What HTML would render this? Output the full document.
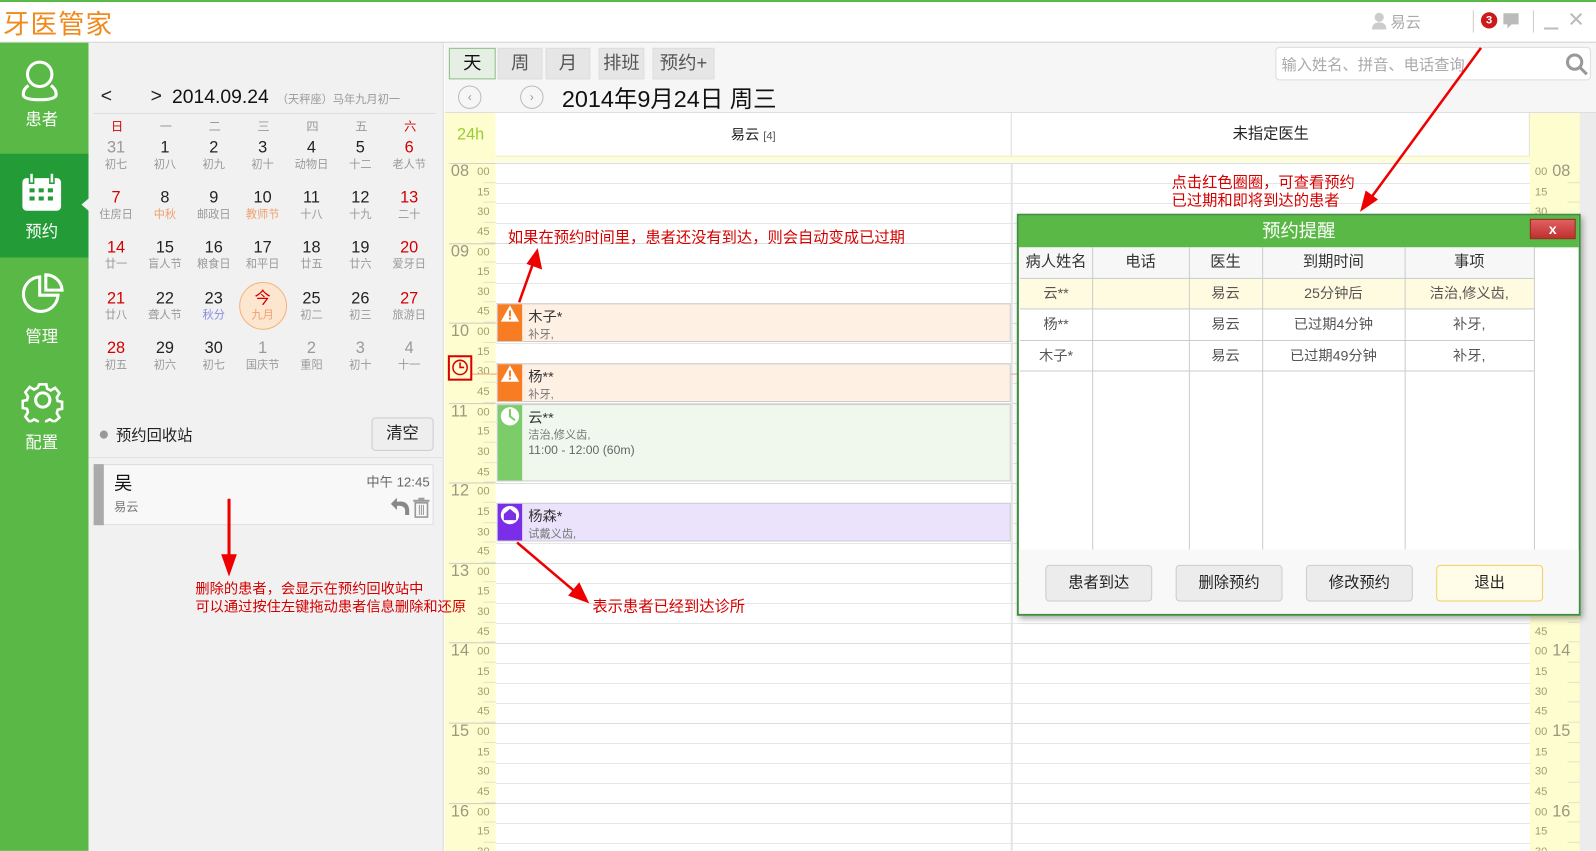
<!DOCTYPE html>
<html><head><meta charset="utf-8"><style>
*{margin:0;padding:0;box-sizing:border-box}
body{width:1596px;height:851px;overflow:hidden;background:#fff;font-family:"Liberation Sans","Noto Sans CJK SC",sans-serif}
#w{position:absolute;left:0;top:0;width:1568px;height:836px;transform:scale(1.01786);transform-origin:0 0;overflow:hidden}
.a{position:absolute}
.red{color:#d40000}
.cal{position:absolute;width:48px;text-align:center}
.cal .n{font-size:16px;color:#222;height:18px;line-height:18px}
.cal .n.r{color:#d40000}
.cal .l{font-size:11px;color:#999;line-height:14px}
.tab{position:absolute;top:47px;height:31px;background:#e6e6e6;border:1px solid #ddd;font-size:18px;color:#555;text-align:center;line-height:29px}
.slot{height:19.65px;position:relative;font-size:11px;color:#a0a070}
.tc .slot .m{position:absolute;right:6px;top:3px}
.tc .slot .h{position:absolute;left:6px;top:0px;font-size:16px;color:#999980}
.tc .slot::after{content:"";position:absolute;right:0;width:12px;bottom:0;border-bottom:1px solid #e4e4c8}
.tc .slot.hr::before{content:"";position:absolute;left:4px;right:0;top:0;border-top:1px solid #ccc}
.tr .slot .m{position:absolute;left:5px;top:3px}
.tr .slot .h{position:absolute;left:22px;top:0;font-size:16px;color:#999980}
.ev{position:absolute;left:488px;width:505px;border:1px solid #ccc}
.ev .s{position:absolute;left:0;top:0;bottom:0;width:24px}
.ev .t{position:absolute;left:30px;top:2px;font-size:14px;color:#333}
.ev .d{position:absolute;left:30px;top:21px;font-size:11px;color:#777}
.th{position:absolute;top:243px;height:30px;line-height:30px;text-align:center;font-size:15px;color:#333}
.td{position:absolute;height:30px;line-height:30px;text-align:center;font-size:14px;color:#555}
.btn{position:absolute;top:555px;width:105px;height:36px;border:1px solid #ccc;border-radius:4px;background:#ececec;font-size:15px;text-align:center;line-height:34px;color:#222}
</style></head><body><div id="w">
<div class="a" style="left:0;top:0;width:1568px;height:2px;background:#5ab946"></div>
<div class="a" style="left:3px;top:4px;font-size:26px;color:#f08a1c;letter-spacing:1px">牙医管家</div>
<div class="a" style="left:0;top:41px;width:1568px;height:1px;background:#ccc"></div>
<svg class="a" style="left:1347px;top:12px" width="16" height="18"><circle cx="8" cy="5" r="4.5" fill="#ccc"/><path d="M1 17 Q1 10 8 10 Q15 10 15 17Z" fill="#ccc"/></svg>
<div class="a" style="left:1366px;top:11px;font-size:15px;color:#aaa">易云</div>
<div class="a" style="left:1447px;top:10px;width:1px;height:22px;background:#ccc"></div>
<div class="a" style="left:1455px;top:12px;width:16px;height:16px;border-radius:50%;background:#cc1a1a;color:#fff;font-size:11px;font-weight:bold;text-align:center;line-height:16px">3</div>
<svg class="a" style="left:1476px;top:12px" width="17" height="17"><path d="M1 1H16V12H9L5 16V12H1Z" fill="#bbb"/></svg>
<div class="a" style="left:1506px;top:10px;width:1px;height:22px;background:#ccc"></div>
<div class="a" style="left:1517px;top:27px;width:14px;height:2px;background:#bbb"></div>
<div class="a" style="left:1540px;top:7px;font-size:20px;color:#bbb">✕</div>
<div class="a" style="left:0;top:42px;width:87px;height:800px;background:#5ab946"></div>
<div class="a" style="left:0;top:151px;width:87px;height:102px;background:#239b36"></div>
<div class="a" style="left:80px;top:195px;width:0;height:0;border-top:6px solid transparent;border-bottom:6px solid transparent;border-right:7px solid #f0f0f0"></div>
<svg class="a" style="left:20px;top:58px" width="40" height="44" fill="none" stroke="#fff" stroke-width="3"><circle cx="19" cy="15" r="12"/><path d="M8 26 Q2 30 3 36 Q5 40 19 40 Q33 40 35 36 Q36 30 30 26"/></svg>
<div class="a" style="left:0;top:104px;width:82px;text-align:center;color:#fff;font-size:16px">患者</div>
<svg class="a" style="left:21px;top:170px" width="40" height="38"><rect x="1" y="5" width="38" height="32" rx="4" fill="#fff"/><rect x="8" y="0" width="4" height="10" fill="#fff" stroke="#239b36" stroke-width="1.5"/><rect x="28" y="0" width="4" height="10" fill="#fff" stroke="#239b36" stroke-width="1.5"/><g fill="#239b36"><rect x="8" y="15" width="5" height="4"/><rect x="17" y="15" width="5" height="4"/><rect x="26" y="15" width="5" height="4"/><rect x="8" y="23" width="5" height="4"/><rect x="17" y="23" width="5" height="4"/><rect x="26" y="23" width="5" height="4"/></g></svg>
<div class="a" style="left:0;top:214px;width:82px;text-align:center;color:#fff;font-size:16px">预约</div>
<svg class="a" style="left:21px;top:268px" width="42" height="42" fill="none" stroke="#fff" stroke-width="3"><path d="M18 4 A17 17 0 1 0 36 22 L18 22Z"/><path d="M24 2 A16 16 0 0 1 40 17 L24 17Z"/></svg>
<div class="a" style="left:0;top:317px;width:82px;text-align:center;color:#fff;font-size:16px">管理</div>
<svg class="a" style="left:21px;top:373px" width="42" height="42" fill="none" stroke="#fff" stroke-width="3"><circle cx="21" cy="20" r="7"/><path d="M17 3h8l1 5 4 2 5-3 5 6-3 5 1 4 5 1v8l-5 1-1 4 3 5-6 5-5-3-4 2-1 5h-8l-1-5-4-2-5 3-5-6 3-5-1-4-5-1v-8l5-1 1-4-3-5 5-6 5 3 4-2z" transform="translate(3 2) scale(.86)"/></svg>
<div class="a" style="left:0;top:421px;width:82px;text-align:center;color:#fff;font-size:16px">配置</div>
<div class="a" style="left:87px;top:42px;width:349px;height:800px;background:#f1f1f1;border-right:1px solid #ddd"></div>
<div class="a" style="left:99px;top:84px;font-size:19px;color:#222">&lt;</div>
<div class="a" style="left:148px;top:84px;font-size:19px;color:#222">&gt;</div>
<div class="a" style="left:169px;top:85px;font-size:19px;color:#111">2014.09.24</div>
<div class="a" style="left:272px;top:89px;font-size:11px;color:#999">（天秤座）马年九月初一</div>
<div class="a" style="left:92px;top:111px;width:336px;height:1px;background:#ddd"></div>
<div class="a" style="left:90px;top:115px;width:336px;font-size:12px;color:#999">
<span class="a red" style="left:19px">日</span><span class="a" style="left:67px">一</span><span class="a" style="left:115px">二</span><span class="a" style="left:163px">三</span><span class="a" style="left:211px">四</span><span class="a" style="left:259px">五</span><span class="a red" style="left:307px">六</span></div>
<div class="cal" style="left:90px;top:137px"><div class="n" style="color:#999">31</div><div class="l">初七</div></div>
<div class="cal" style="left:138px;top:137px"><div class="n">1</div><div class="l">初八</div></div>
<div class="cal" style="left:186px;top:137px"><div class="n">2</div><div class="l">初九</div></div>
<div class="cal" style="left:234px;top:137px"><div class="n">3</div><div class="l">初十</div></div>
<div class="cal" style="left:282px;top:137px"><div class="n">4</div><div class="l">动物日</div></div>
<div class="cal" style="left:330px;top:137px"><div class="n">5</div><div class="l">十二</div></div>
<div class="cal" style="left:378px;top:137px"><div class="n r">6</div><div class="l">老人节</div></div>
<div class="cal" style="left:90px;top:186px"><div class="n r">7</div><div class="l">住房日</div></div>
<div class="cal" style="left:138px;top:186px"><div class="n">8</div><div class="l" style="color:#f0a070">中秋</div></div>
<div class="cal" style="left:186px;top:186px"><div class="n">9</div><div class="l">邮政日</div></div>
<div class="cal" style="left:234px;top:186px"><div class="n">10</div><div class="l" style="color:#f0a070">教师节</div></div>
<div class="cal" style="left:282px;top:186px"><div class="n">11</div><div class="l">十八</div></div>
<div class="cal" style="left:330px;top:186px"><div class="n">12</div><div class="l">十九</div></div>
<div class="cal" style="left:378px;top:186px"><div class="n r">13</div><div class="l">二十</div></div>
<div class="cal" style="left:90px;top:235px"><div class="n r">14</div><div class="l">廿一</div></div>
<div class="cal" style="left:138px;top:235px"><div class="n">15</div><div class="l">盲人节</div></div>
<div class="cal" style="left:186px;top:235px"><div class="n">16</div><div class="l">粮食日</div></div>
<div class="cal" style="left:234px;top:235px"><div class="n">17</div><div class="l">和平日</div></div>
<div class="cal" style="left:282px;top:235px"><div class="n">18</div><div class="l">廿五</div></div>
<div class="cal" style="left:330px;top:235px"><div class="n">19</div><div class="l">廿六</div></div>
<div class="cal" style="left:378px;top:235px"><div class="n r">20</div><div class="l">爱牙日</div></div>
<div class="cal" style="left:90px;top:285px"><div class="n r">21</div><div class="l">廿八</div></div>
<div class="cal" style="left:138px;top:285px"><div class="n">22</div><div class="l">聋人节</div></div>
<div class="cal" style="left:186px;top:285px"><div class="n">23</div><div class="l" style="color:#8a8ae0">秋分</div></div>
<div class="a" style="left:235px;top:277px;width:47px;height:47px;border-radius:50%;background:#fde6cf;border:1px solid #f4b27a"></div>
<div class="cal" style="left:234px;top:285px"><div class="n r">今</div><div class="l" style="color:#f0a070">九月</div></div>
<div class="cal" style="left:282px;top:285px"><div class="n">25</div><div class="l">初二</div></div>
<div class="cal" style="left:330px;top:285px"><div class="n">26</div><div class="l">初三</div></div>
<div class="cal" style="left:378px;top:285px"><div class="n r">27</div><div class="l">旅游日</div></div>
<div class="cal" style="left:90px;top:334px"><div class="n r">28</div><div class="l">初五</div></div>
<div class="cal" style="left:138px;top:334px"><div class="n">29</div><div class="l">初六</div></div>
<div class="cal" style="left:186px;top:334px"><div class="n">30</div><div class="l">初七</div></div>
<div class="cal" style="left:234px;top:334px"><div class="n" style="color:#999">1</div><div class="l">国庆节</div></div>
<div class="cal" style="left:282px;top:334px"><div class="n" style="color:#999">2</div><div class="l">重阳</div></div>
<div class="cal" style="left:330px;top:334px"><div class="n" style="color:#999">3</div><div class="l">初十</div></div>
<div class="cal" style="left:378px;top:334px"><div class="n" style="color:#999">4</div><div class="l">十一</div></div>
<div class="a" style="left:98px;top:423px;width:8px;height:8px;border-radius:50%;background:#999"></div>
<div class="a" style="left:114px;top:417px;font-size:15px;color:#222">预约回收站</div>
<div class="a" style="left:365px;top:410px;width:61px;height:33px;border:1px solid #ccc;border-radius:4px;background:#eee;font-size:16px;text-align:center;line-height:31px;color:#222">清空</div>
<div class="a" style="left:87px;top:449px;width:349px;height:1px;background:#e2e2e2"></div>
<div class="a" style="left:92px;top:456px;width:334px;height:60px;background:#f8f8f8;border:1px solid #ddd"></div>
<div class="a" style="left:92px;top:456px;width:10px;height:60px;background:#aaa"></div>
<div class="a" style="left:112px;top:461px;font-size:18px;color:#111">吴</div>
<div class="a" style="left:112px;top:489px;font-size:12px;color:#777">易云</div>
<div class="a" style="left:360px;top:463px;font-size:13px;color:#666">中午 12:45</div>
<svg class="a" style="left:381px;top:487px" width="42" height="22"><path d="M3 8 L9 2 L9 6 Q20 4 21 14 L21 19 L17 19 L17 14 Q16 9 9 10 L9 14Z" fill="#888"/><rect x="27" y="7" width="12" height="14" fill="none" stroke="#999" stroke-width="1.6"/><rect x="25" y="4" width="16" height="2" fill="#999"/><rect x="30" y="2" width="6" height="2" fill="#999"/><path d="M31 9V19M33 9V19M35 9V19" stroke="#999"/></svg>
<div class="a" style="left:437px;top:42px;width:1131px;height:69px;background:#f6f6f6"></div>
<div class="tab" style="left:441px;width:46px;background:#e6efe3;border-color:#8cbf84;color:#111">天</div>
<div class="tab" style="left:489px;width:44px">周</div>
<div class="tab" style="left:536px;width:44px">月</div>
<div class="tab" style="left:588px;width:45px">排班</div>
<div class="tab" style="left:641px;width:61px">预约+</div>
<div class="a" style="left:1253px;top:46px;width:310px;height:33px;border:1px solid #ddd;border-radius:4px;background:#fff"></div>
<div class="a" style="left:1259px;top:53px;font-size:15px;color:#aaa">输入姓名、拼音、电话查询</div>
<svg class="a" style="left:1537px;top:51px" width="24" height="24" fill="none" stroke="#999" stroke-width="3"><circle cx="10" cy="10" r="7"/><path d="M15 15L22 22"/></svg>
<div class="a" style="left:450px;top:84px;width:23px;height:23px;border-radius:50%;border:1px solid #bbb;font-size:12px;color:#999;text-align:center;line-height:20px">‹</div>
<div class="a" style="left:511px;top:84px;width:23px;height:23px;border-radius:50%;border:1px solid #bbb;font-size:12px;color:#999;text-align:center;line-height:20px">›</div>
<div class="a" style="left:552px;top:78px;font-size:23px;color:#111">2014年9月24日 周三</div>
<div class="a" style="left:437px;top:110px;width:1131px;height:1px;background:#ddd"></div>
<div class="a" style="left:437px;top:111px;width:50px;height:49px;background:#fdfdd0"></div>
<div class="a" style="left:449px;top:124px;font-size:16px;color:#9acd32">24h</div>
<div class="a" style="left:487px;top:111px;width:507px;height:42px;background:#fff;border-right:1px solid #ddd;text-align:center;line-height:42px;font-size:14px;color:#222">易云 <span style="font-size:11px;color:#555">[4]</span></div>
<div class="a" style="left:995px;top:111px;width:508px;height:42px;background:#fff;border-right:1px solid #ddd;text-align:center;line-height:42px;font-size:15px;color:#222">未指定医生</div>
<div class="a" style="left:487px;top:153px;width:1016px;height:7px;background:#fdfde0;border-top:1px solid #eeeebb"></div>
<div class="a" style="left:1503px;top:111px;width:49px;height:725px;background:#fdfdd0"></div>
<div class="a" style="left:1552px;top:111px;width:16px;height:725px;background:#ececec"></div>
<div class="a" style="left:487px;top:160px;width:1016px;height:676px;background:repeating-linear-gradient(to bottom,#ddd 0,#ddd 1px,transparent 1px,transparent 78.6px),repeating-linear-gradient(to bottom,#e6e6e6 0,#e6e6e6 1px,#fff 1px,#fff 19.65px)"></div>
<div class="a" style="left:993px;top:160px;width:2px;height:676px;background:#e4e4e4"></div>
<div class="a tc" style="left:437px;top:160px;width:50px;height:676px;background:#fdfdd0;overflow:hidden">
<div class="slot hr"><span class="h">08</span><span class="m">00</span></div><div class="slot"><span class="m">15</span></div><div class="slot"><span class="m">30</span></div><div class="slot"><span class="m">45</span></div>
<div class="slot hr"><span class="h">09</span><span class="m">00</span></div><div class="slot"><span class="m">15</span></div><div class="slot"><span class="m">30</span></div><div class="slot"><span class="m">45</span></div>
<div class="slot hr"><span class="h">10</span><span class="m">00</span></div><div class="slot"><span class="m">15</span></div><div class="slot"><span class="m">30</span></div><div class="slot"><span class="m">45</span></div>
<div class="slot hr"><span class="h">11</span><span class="m">00</span></div><div class="slot"><span class="m">15</span></div><div class="slot"><span class="m">30</span></div><div class="slot"><span class="m">45</span></div>
<div class="slot hr"><span class="h">12</span><span class="m">00</span></div><div class="slot"><span class="m">15</span></div><div class="slot"><span class="m">30</span></div><div class="slot"><span class="m">45</span></div>
<div class="slot hr"><span class="h">13</span><span class="m">00</span></div><div class="slot"><span class="m">15</span></div><div class="slot"><span class="m">30</span></div><div class="slot"><span class="m">45</span></div>
<div class="slot hr"><span class="h">14</span><span class="m">00</span></div><div class="slot"><span class="m">15</span></div><div class="slot"><span class="m">30</span></div><div class="slot"><span class="m">45</span></div>
<div class="slot hr"><span class="h">15</span><span class="m">00</span></div><div class="slot"><span class="m">15</span></div><div class="slot"><span class="m">30</span></div><div class="slot"><span class="m">45</span></div>
<div class="slot hr"><span class="h">16</span><span class="m">00</span></div><div class="slot"><span class="m">15</span></div><div class="slot"><span class="m">30</span></div>
</div>
<div class="a tr tc" style="left:1503px;top:160px;width:49px;height:676px;overflow:hidden">
<div class="slot"><span class="m">00</span><span class="h">08</span></div><div class="slot"><span class="m">15</span></div><div class="slot"><span class="m">30</span></div><div class="slot"><span class="m">45</span></div>
<div class="slot"><span class="m">00</span><span class="h">09</span></div><div class="slot"><span class="m">15</span></div><div class="slot"><span class="m">30</span></div><div class="slot"><span class="m">45</span></div>
<div class="slot"><span class="m">00</span><span class="h">10</span></div><div class="slot"><span class="m">15</span></div><div class="slot"><span class="m">30</span></div><div class="slot"><span class="m">45</span></div>
<div class="slot"><span class="m">00</span><span class="h">11</span></div><div class="slot"><span class="m">15</span></div><div class="slot"><span class="m">30</span></div><div class="slot"><span class="m">45</span></div>
<div class="slot"><span class="m">00</span><span class="h">12</span></div><div class="slot"><span class="m">15</span></div><div class="slot"><span class="m">30</span></div><div class="slot"><span class="m">45</span></div>
<div class="slot"><span class="m">00</span><span class="h">13</span></div><div class="slot"><span class="m">15</span></div><div class="slot"><span class="m">30</span></div><div class="slot"><span class="m">45</span></div>
<div class="slot"><span class="m">00</span><span class="h">14</span></div><div class="slot"><span class="m">15</span></div><div class="slot"><span class="m">30</span></div><div class="slot"><span class="m">45</span></div>
<div class="slot"><span class="m">00</span><span class="h">15</span></div><div class="slot"><span class="m">15</span></div><div class="slot"><span class="m">30</span></div><div class="slot"><span class="m">45</span></div>
<div class="slot"><span class="m">00</span><span class="h">16</span></div><div class="slot"><span class="m">15</span></div><div class="slot"><span class="m">30</span></div>
</div>
<div class="a" style="left:463px;top:367px;width:1040px;height:1px;background:#f0a080"></div>
<div class="a" style="left:440px;top:349px;width:24px;height:25px;border:2px solid #d00;background:#fdfdd0"></div>
<svg class="a" style="left:443px;top:352px" width="18" height="18" fill="none" stroke="#d00" stroke-width="1.5"><circle cx="9" cy="9" r="7"/><path d="M9 4V9H13"/></svg>
<div class="ev" style="top:298px;height:38px;background:#fff0e4"><div class="s" style="background:#f77c22"></div><svg class="a" style="left:2px;top:0" width="20" height="18"><path d="M10 1L19 17H1Z" fill="#fff"/><rect x="9" y="6" width="2" height="6" fill="#f77c22"/><rect x="9" y="13" width="2" height="2" fill="#f77c22"/></svg><div class="t">木子*</div><div class="d">补牙,</div></div>
<div class="ev" style="top:357px;height:38px;background:#fff0e4"><div class="s" style="background:#f77c22"></div><svg class="a" style="left:2px;top:0" width="20" height="18"><path d="M10 1L19 17H1Z" fill="#fff"/><rect x="9" y="6" width="2" height="6" fill="#f77c22"/><rect x="9" y="13" width="2" height="2" fill="#f77c22"/></svg><div class="t">杨**</div><div class="d">补牙,</div></div>
<div class="ev" style="top:397px;height:76px;background:#f0f8ee"><div class="s" style="background:#7ccd6a"></div><svg class="a" style="left:2px;top:1px" width="20" height="20"><circle cx="10" cy="10" r="9" fill="#fff"/><path d="M10 3V10L15 14" stroke="#7ccd6a" stroke-width="2" fill="none"/></svg><div class="t">云**</div><div class="d">洁治,修义齿,</div><div class="d" style="top:37px;font-size:12px;color:#666">11:00 - 12:00 (60m)</div></div>
<div class="ev" style="top:494px;height:38px;background:#ebe3fb"><div class="s" style="background:#7a2ee8"></div><svg class="a" style="left:2px;top:1px" width="20" height="20"><circle cx="10" cy="10" r="9" fill="#fff"/><path d="M10 4L16 9V15H4V9Z" fill="#7a2ee8"/></svg><div class="t">杨森*</div><div class="d">试戴义齿,</div></div>
<div class="a" style="left:999px;top:210px;width:554px;height:395px;border:2px solid #3f8f3f;background:#fff;box-shadow:2px 3px 6px rgba(0,0,0,.35)"></div>
<div class="a" style="left:1001px;top:212px;width:550px;height:31px;background:#5ab946;color:#fff;text-align:center;font-size:18px;line-height:31px">预约提醒</div>
<div class="a" style="left:1503px;top:215px;width:45px;height:20px;background:linear-gradient(#e06060,#c03030);border:1px solid #a02020;color:#fff;font-size:14px;font-weight:bold;text-align:center;line-height:18px">x</div>
<div class="a" style="left:1002px;top:243px;width:505px;height:30px;background:#f7f7f7"></div>
<div class="a" style="left:1002px;top:273px;width:505px;height:30px;background:#fffbe0"></div>
<div class="a" style="left:1002px;top:273px;width:505px;height:1px;background:#ccc"></div>
<div class="a" style="left:1002px;top:303px;width:505px;height:1px;background:#ccc"></div>
<div class="a" style="left:1002px;top:334px;width:505px;height:1px;background:#ccc"></div>
<div class="a" style="left:1002px;top:364px;width:505px;height:1px;background:#ccc"></div>
<div class="a" style="left:1073px;top:243px;width:1px;height:297px;background:#ccc"></div>
<div class="a" style="left:1168px;top:243px;width:1px;height:297px;background:#ccc"></div>
<div class="a" style="left:1240px;top:243px;width:1px;height:297px;background:#ccc"></div>
<div class="a" style="left:1380px;top:243px;width:1px;height:297px;background:#ccc"></div>
<div class="a" style="left:1507px;top:243px;width:1px;height:297px;background:#ccc"></div>
<div class="th" style="left:1002px;width:71px">病人姓名</div><div class="th" style="left:1073px;width:95px">电话</div><div class="th" style="left:1168px;width:72px">医生</div><div class="th" style="left:1240px;width:140px">到期时间</div><div class="th" style="left:1380px;width:127px">事项</div>
<div class="td" style="left:1002px;width:71px;top:273px">云**</div><div class="td" style="left:1168px;width:72px;top:273px">易云</div><div class="td" style="left:1240px;width:140px;top:273px">25分钟后</div><div class="td" style="left:1380px;width:127px;top:273px">洁治,修义齿,</div>
<div class="td" style="left:1002px;width:71px;top:303px">杨**</div><div class="td" style="left:1168px;width:72px;top:303px">易云</div><div class="td" style="left:1240px;width:140px;top:303px">已过期4分钟</div><div class="td" style="left:1380px;width:127px;top:303px">补牙,</div>
<div class="td" style="left:1002px;width:71px;top:334px">木子*</div><div class="td" style="left:1168px;width:72px;top:334px">易云</div><div class="td" style="left:1240px;width:140px;top:334px">已过期49分钟</div><div class="td" style="left:1380px;width:127px;top:334px">补牙,</div>
<div class="a" style="left:1001px;top:540px;width:550px;height:63px;background:#f8f8f8"></div>
<div class="btn" style="left:1027px">患者到达</div><div class="btn" style="left:1155px">删除预约</div><div class="btn" style="left:1283px">修改预约</div><div class="btn" style="left:1411px;background:#fffde8;border-color:#f0d060">退出</div>
<div class="a red" style="left:499px;top:222px;font-size:15px">如果在预约时间里，患者还没有到达，则会自动变成已过期</div>
<div class="a red" style="left:1151px;top:171px;font-size:15px;line-height:18px">点击红色圈圈，可查看预约<br>已过期和即将到达的患者</div>
<div class="a red" style="left:192px;top:569px;font-size:14px;line-height:18px">删除的患者，会显示在预约回收站中<br>可以通过按住左键拖动患者信息删除和还原</div>
<div class="a red" style="left:582px;top:585px;font-size:15px">表示患者已经到达诊所</div>
<svg class="a" style="left:0;top:0" width="1568" height="836">
<g fill="#e00" stroke="#e00">
<path d="M510 297L524 258" stroke-width="2.5"/><path d="M528 245L532 264L518 259Z"/>
<path d="M1455 47L1345 197" stroke-width="2.5"/><path d="M1337 207L1342 188L1353 196Z"/>
<path d="M225 490L225 550" stroke-width="3"/><path d="M225 565L218 545L232 545Z"/>
<path d="M508 533L567 583" stroke-width="2.5"/><path d="M578 592L559 585L569 573Z"/>
</g></svg>
</div></body></html>
